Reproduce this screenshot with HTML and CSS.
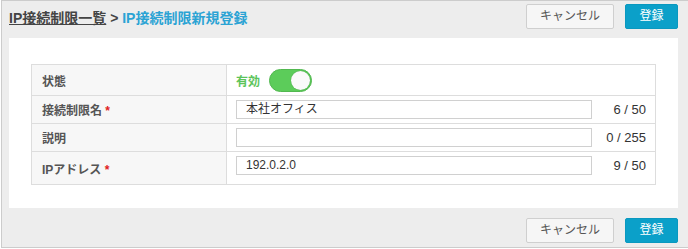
FILE: index.html
```html
<!DOCTYPE html>
<html lang="ja">
<head>
<meta charset="utf-8">
<link rel="stylesheet" href="styles.css">
</head>
<body>
<div class="window">
  <div class="bar">
    <div class="crumbs"><a class="crumb-link">IP接続制限一覧</a> <span class="sep">&gt;</span> <span class="current">IP接続制限新規登録</span></div>
    <div class="actions">
      <button class="btn btn-cancel">キャンセル</button>
      <button class="btn btn-primary">登録</button>
    </div>
  </div>
  <div class="panel">
    <table class="form">
      <tr class="row-status">
        <th>状態</th>
        <td colspan="2"><div class="status"><span class="status-text">有効</span><span class="switch"><span class="knob"></span></span></div></td>
      </tr>
      <tr>
        <th>接続制限名 <span class="req">*</span></th>
        <td><div class="input">本社オフィス</div></td>
        <td class="count">6 / 50</td>
      </tr>
      <tr>
        <th>説明</th>
        <td><div class="input"></div></td>
        <td class="count">0 / 255</td>
      </tr>
      <tr class="row-last">
        <th>IPアドレス <span class="req">*</span></th>
        <td><div class="input">192.0.2.0</div></td>
        <td class="count">9 / 50</td>
      </tr>
    </table>
  </div>
  <div class="bar bar-bottom">
    <div class="actions">
      <button class="btn btn-cancel">キャンセル</button>
      <button class="btn btn-primary">登録</button>
    </div>
  </div>
</div>
</body>
</html>
```
FILE: styles.css
```css
html, body {
  margin: 0;
  padding: 0;
  background: #ffffff;
}
body {
  font-family: "Liberation Sans", "Noto Sans CJK JP", sans-serif;
  color: #333;
}
.window {
  margin-left: 1px;
  height: 246px;
  border: 1px solid #cccccc;
  border-right: none;
  background: #ededed;
  padding: 0 10px 0 7px;
  display: flex;
  flex-direction: column;
}
.bar {
  height: 37px;
  flex: none;
  display: flex;
  align-items: flex-start;
  justify-content: space-between;
}
.crumbs {
  margin-top: 7px;
  font-size: 14px;
  font-weight: bold;
  line-height: 20px;
  white-space: nowrap;
}
.crumb-link {
  color: #444;
  text-decoration: underline;
}
.sep {
  color: #444;
}
.current {
  color: #2ba3d4;
}
.actions {
  display: flex;
  gap: 11px;
  margin-top: 3px;
}
.btn {
  font-family: "Liberation Sans", "Noto Sans CJK JP", sans-serif;
  font-size: 12px;
  height: 25px;
  padding: 0;
  border-radius: 2px;
  line-height: 23px;
  white-space: nowrap;
  cursor: pointer;
}
.btn-cancel {
  width: 88px;
  background: #f6f6f6;
  border: 1px solid #cfcfcf;
  color: #555;
}
.btn-primary {
  width: 53px;
  background: #0ba0c9;
  border: 1px solid #0a98bf;
  color: #fff;
}
.panel {
  background: #fff;
  height: 170px;
  flex: none;
  padding: 26px 22px 0 22px;
  box-sizing: border-box;
}
.form {
  width: 100%;
  border-collapse: collapse;
  border: 1px solid #dddddd;
  font-size: 12px;
}
.form th {
  width: 195px;
  box-sizing: border-box;
  text-align: left;
  background: #f7f7f7;
  color: #555;
  font-weight: bold;
  padding: 0 10px;
  border: 1px solid #dddddd;
  height: 28px;
}
.form td {
  border-top: 1px solid #dddddd;
  border-bottom: 1px solid #dddddd;
  padding: 4px 0 4px 9px;
  height: 19px;
}
.row-status th, .row-status td {
  height: 30px;
}
.row-status td {
  padding: 0 9px;
}
.row-last th {
  height: 32px;
}
.row-last td {
  padding-bottom: 9px;
}
.req {
  color: #e02020;
}
.status {
  display: flex;
  align-items: center;
  gap: 9px;
}
.status-text {
  color: #5cc45a;
  font-weight: bold;
}
.switch {
  width: 43px;
  height: 23px;
  border-radius: 12px;
  background: #5ccc5a;
  position: relative;
  box-sizing: border-box;
  border: 1px solid #52b850;
}
.knob {
  position: absolute;
  right: 1px;
  top: 1px;
  width: 19px;
  height: 19px;
  border-radius: 50%;
  background: #fafafa;
  box-shadow: 0 0 1px rgba(0,0,0,0.3);
}
.input {
  width: 356px;
  height: 19px;
  box-sizing: border-box;
  border: 1px solid #d0d0d0;
  padding: 0 9px;
  line-height: 17px;
  font-size: 12px;
  color: #333;
}
.count {
  text-align: right;
  padding-right: 9px !important;
  font-size: 13px;
  color: #333;
  white-space: nowrap;
}
.bar-bottom {
  margin-top: 7px;
  justify-content: flex-end;
}
```
